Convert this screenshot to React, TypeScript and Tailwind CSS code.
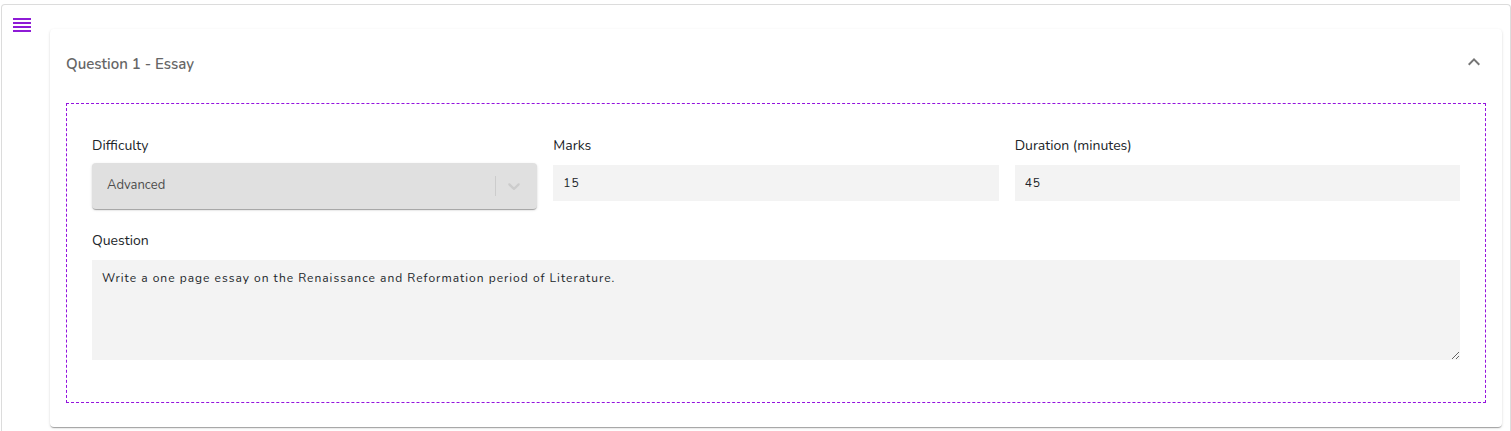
import { useState } from "react";

function ReorderIcon() {
  return (
    <svg width="18" height="14" viewBox="0 0 18 14" fill="currentColor" shapeRendering="crispEdges" aria-hidden="true">
      <path d="M0 0h18v2H0zM0 4h18v2H0zM0 8h18v2H0zM0 12h18v2H0z" />
    </svg>
  );
}

function ExpandIcon({ open }: { open: boolean }) {
  return (
    <svg className={open ? "" : "rotate-180"} width="24" height="24" viewBox="0 0 24 24" fill="currentColor" aria-hidden="true">
      <path d="M12 8l-6 6 1.41 1.41L12 10.83l4.59 4.58L18 14z" />
    </svg>
  );
}

function ChevronIcon() {
  return (
    <svg width="20" height="20" viewBox="0 0 20 20" fill="currentColor" aria-hidden="true">
      <path d="M4.516 7.548c0.436-0.446 1.043-0.481 1.576 0l3.908 3.747 3.908-3.747c0.533-0.481 1.141-0.446 1.574 0 0.436 0.445 0.408 1.197 0 1.615-0.406 0.418-4.695 4.502-4.695 4.502-0.217 0.223-0.502 0.335-0.787 0.335s-0.57-0.112-0.789-0.335c0 0-4.287-4.084-4.695-4.502s-0.436-1.17 0-1.615z" />
    </svg>
  );
}

function NumberField({ id, label, initial }: { id: string; label: string; initial: string }) {
  return (
    <div className="flex min-w-0 flex-col gap-[7px]">
      <label htmlFor={id} className="text-sm leading-6">{label}</label>
      <input
        id={id}
        inputMode="numeric"
        defaultValue={initial}
        className="h-9 w-full bg-[#f3f3f3] px-2.5 text-xs tracking-[1px] outline-none"
      />
    </div>
  );
}

export default function App() {
  const [open, setOpen] = useState(true);
  return (
    <main className="bg-white pt-1 pl-px font-['Nunito','Lato',sans-serif] text-[#212529]">
      <div className="flex items-start rounded-t border border-b-0 border-[#dcdcdc] pr-2 pb-1">
        <button type="button" aria-label="Reorder question" className="mt-3 flex w-12 shrink-0 pl-[11px] pt-px text-[#8e1bd6]">
          <ReorderIcon />
        </button>
        <section className="mt-6 min-w-0 flex-1 rounded bg-white px-4 pb-6 shadow-[0_2px_1px_-1px_rgba(0,0,0,0.2),0_1px_1px_0_rgba(0,0,0,0.14),0_1px_3px_0_rgba(0,0,0,0.12)]">
          <header className="flex h-[74px] items-center justify-between pb-1">
            <h2 className="text-[15px] font-semibold text-[#666666]">Question 1 - Essay</h2>
            <button type="button" aria-label="Toggle question" aria-expanded={open} onClick={() => setOpen(!open)} className="pb-1 text-[#757575]">
              <ExpandIcon open={open} />
            </button>
          </header>
          {open && (
            <form className="flex flex-col gap-5 border border-dashed border-[#9413de] px-[25px] pt-[30px] pb-[42px]">
              <div className="grid grid-cols-3 items-start gap-4">
                <div className="flex min-w-0 flex-col gap-[5px]">
                  <label htmlFor="difficulty" className="text-sm leading-6">Difficulty</label>
                  <div className="grid items-center rounded bg-[#e0e0e0] shadow-[0_2px_1px_-1px_rgba(0,0,0,0.2),0_1px_1px_0_rgba(0,0,0,0.14),0_1px_3px_0_rgba(0,0,0,0.12)]">
                    <select
                      id="difficulty"
                      disabled
                      defaultValue="Advanced"
                      className="col-start-1 row-start-1 h-[46px] w-full appearance-none bg-transparent pr-12 pl-[15px] text-[13px] text-[#4d4d4d] opacity-100 outline-none"
                    >
                      <option>Beginner</option>
                      <option>Intermediate</option>
                      <option>Advanced</option>
                    </select>
                    <span className="pointer-events-none col-start-1 row-start-1 flex items-center justify-self-end pr-[13px] text-[#cccccc]">
                      <span className="mr-2 h-5 w-px bg-[#cccccc]" />
                      <ChevronIcon />
                    </span>
                  </div>
                </div>
                <NumberField id="marks" label="Marks" initial="15" />
                <NumberField id="duration" label="Duration (minutes)" initial="45" />
              </div>
              <div className="flex flex-col gap-[7px]">
                <label htmlFor="question" className="text-sm leading-6">Question</label>
                <textarea
                  id="question"
                  defaultValue="Write a one page essay on the Renaissance and Reformation period of Literature."
                  className="block h-[100px] w-full resize bg-[#f3f3f3] px-2.5 py-2 text-xs leading-5 tracking-[1px] outline-none"
                />
              </div>
            </form>
          )}
        </section>
      </div>
    </main>
  );
}
